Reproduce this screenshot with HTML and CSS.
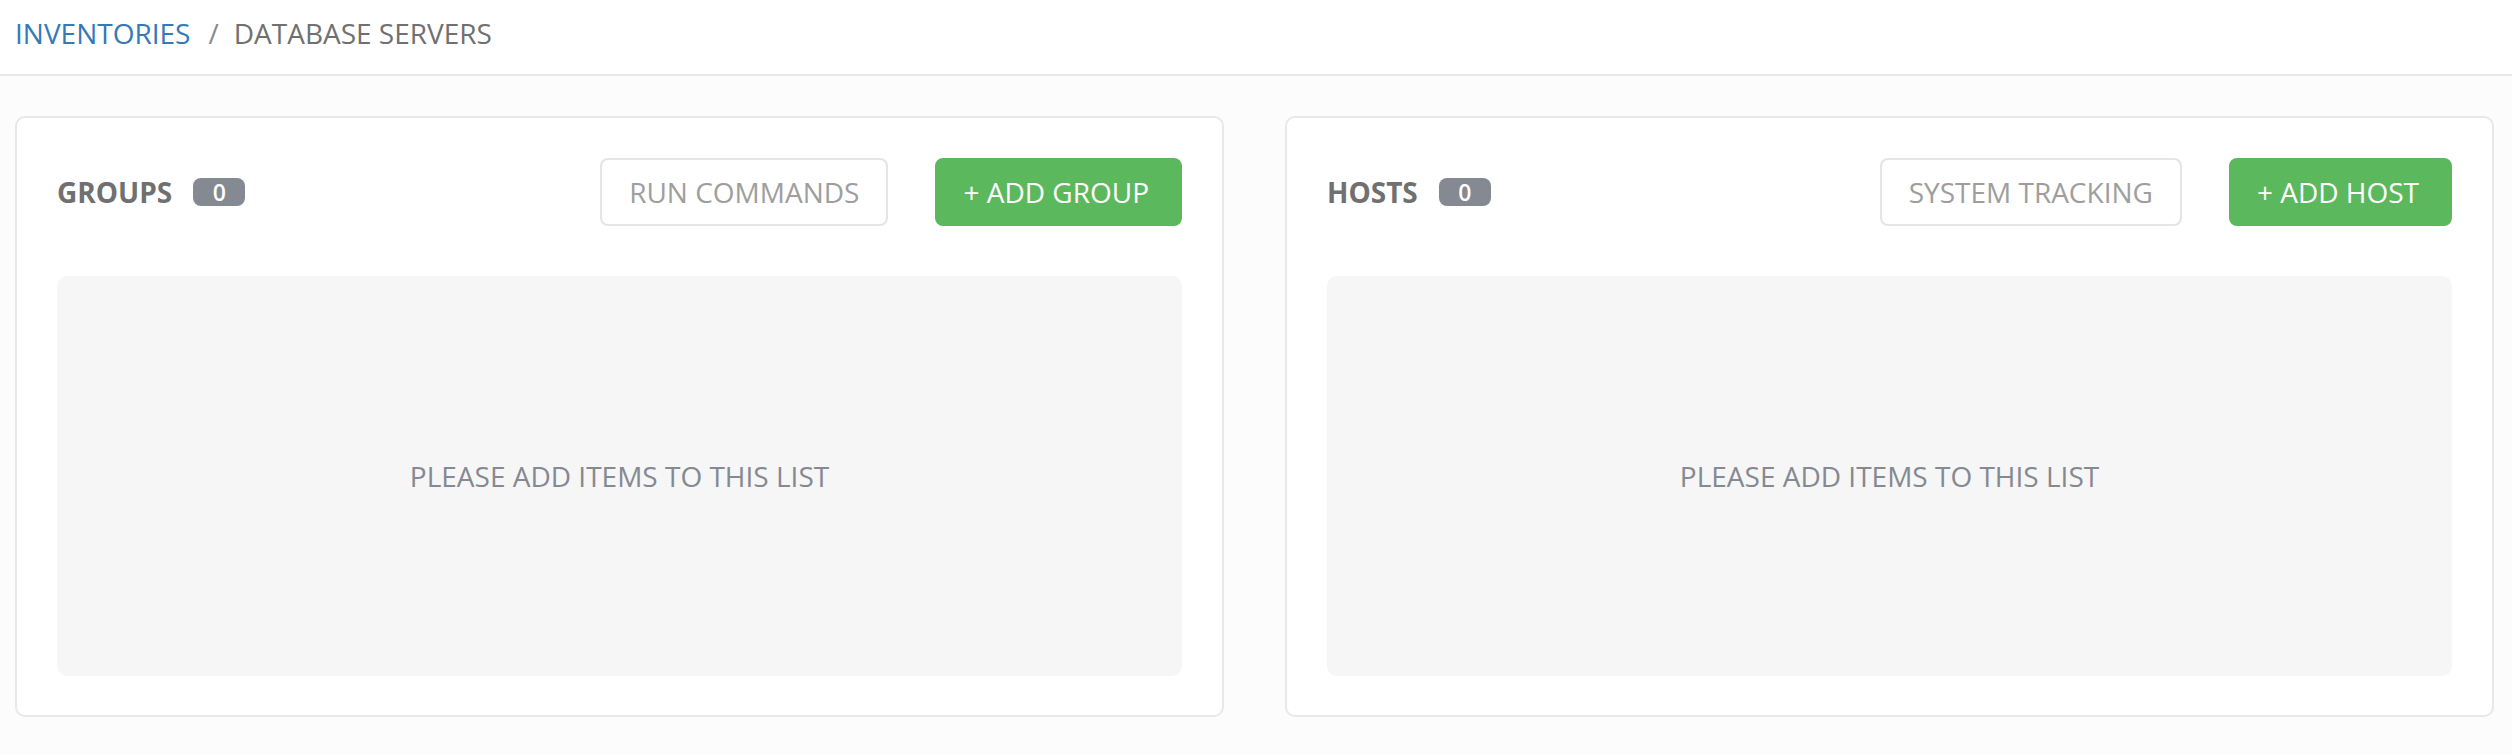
FILE: index.html
```html
<!DOCTYPE html>
<html>
<head>
<meta charset="utf-8">
<link rel="stylesheet" href="styles.css">
</head>
<body>
<header class="crumbs">
  <a class="crumb-link" href="#">INVENTORIES</a><span class="crumb-sep">/</span><span class="crumb-current">DATABASE SERVERS</span>
</header>
<main class="panels">
  <section class="panel">
    <div class="panel-head">
      <div class="panel-title">GROUPS <span class="badge">0</span></div>
      <div class="panel-actions">
        <button class="btn btn-outline">RUN COMMANDS</button>
        <button class="btn btn-green">+ ADD GROUP</button>
      </div>
    </div>
    <div class="empty">PLEASE ADD ITEMS TO THIS LIST</div>
  </section>
  <section class="panel">
    <div class="panel-head">
      <div class="panel-title">HOSTS <span class="badge">0</span></div>
      <div class="panel-actions">
        <button class="btn btn-outline">SYSTEM TRACKING</button>
        <button class="btn btn-green">+ ADD HOST</button>
      </div>
    </div>
    <div class="empty">PLEASE ADD ITEMS TO THIS LIST</div>
  </section>
</main>
</body>
</html>
```
FILE: styles.css
```css
html, body {
  margin: 0;
  padding: 0;
  background: #fcfcfc;
  font-family: "Open Sans", "Liberation Sans", sans-serif;
}
.crumbs {
  box-sizing: border-box;
  height: 76px;
  padding: 14px 15px 0;
  background: #fff;
  border-bottom: 2px solid #e8e8e8;
  font-size: 28px;
  line-height: 38px;
  white-space: nowrap;
}
.crumb-link {
  color: #337ab7;
  text-decoration: none;
}
.crumb-sep {
  color: #8a8a8a;
  margin: 0 15px 0 18px;
}
.crumb-current {
  color: #707070;
}
.panels {
  display: grid;
  grid-template-columns: 1fr 1fr;
  gap: 61px;
  padding: 40px 18px 0 15px;
}
.panel {
  background: #fff;
  border: 2px solid #e8e8e8;
  border-radius: 10px;
  padding: 40px 40px 39px;
}
.panel-head {
  display: flex;
  align-items: center;
  justify-content: space-between;
  height: 68px;
  margin-bottom: 50px;
}
.panel-title {
  display: flex;
  align-items: center;
  gap: 21px;
  font-size: 28px;
  font-weight: 700;
  color: #707070;
}
.badge {
  display: inline-flex;
  align-items: center;
  justify-content: center;
  width: 52px;
  height: 28px;
  border-radius: 8px;
  background: #848992;
  color: #fff;
  font-size: 23px;
  font-weight: 600;
}
.panel-actions {
  display: flex;
  align-items: center;
  gap: 47px;
}
.btn {
  box-sizing: border-box;
  height: 68px;
  padding: 0 27px;
  border-radius: 8px;
  font-family: "Open Sans", "Liberation Sans", sans-serif;
  font-size: 28px;
  line-height: 1;
  cursor: pointer;
}
.btn-outline {
  background: #fff;
  border: 2px solid #e5e5e5;
  color: #9e9e9e;
}
.btn-green {
  background: #5cb85c;
  border: 2px solid #5cb85c;
  color: #fff;
  padding: 0 31px 0 26px;
}
.empty {
  height: 400px;
  border-radius: 10px;
  background: #f6f6f6;
  display: flex;
  align-items: center;
  justify-content: center;
  color: #848992;
  font-size: 28px;
}
```
